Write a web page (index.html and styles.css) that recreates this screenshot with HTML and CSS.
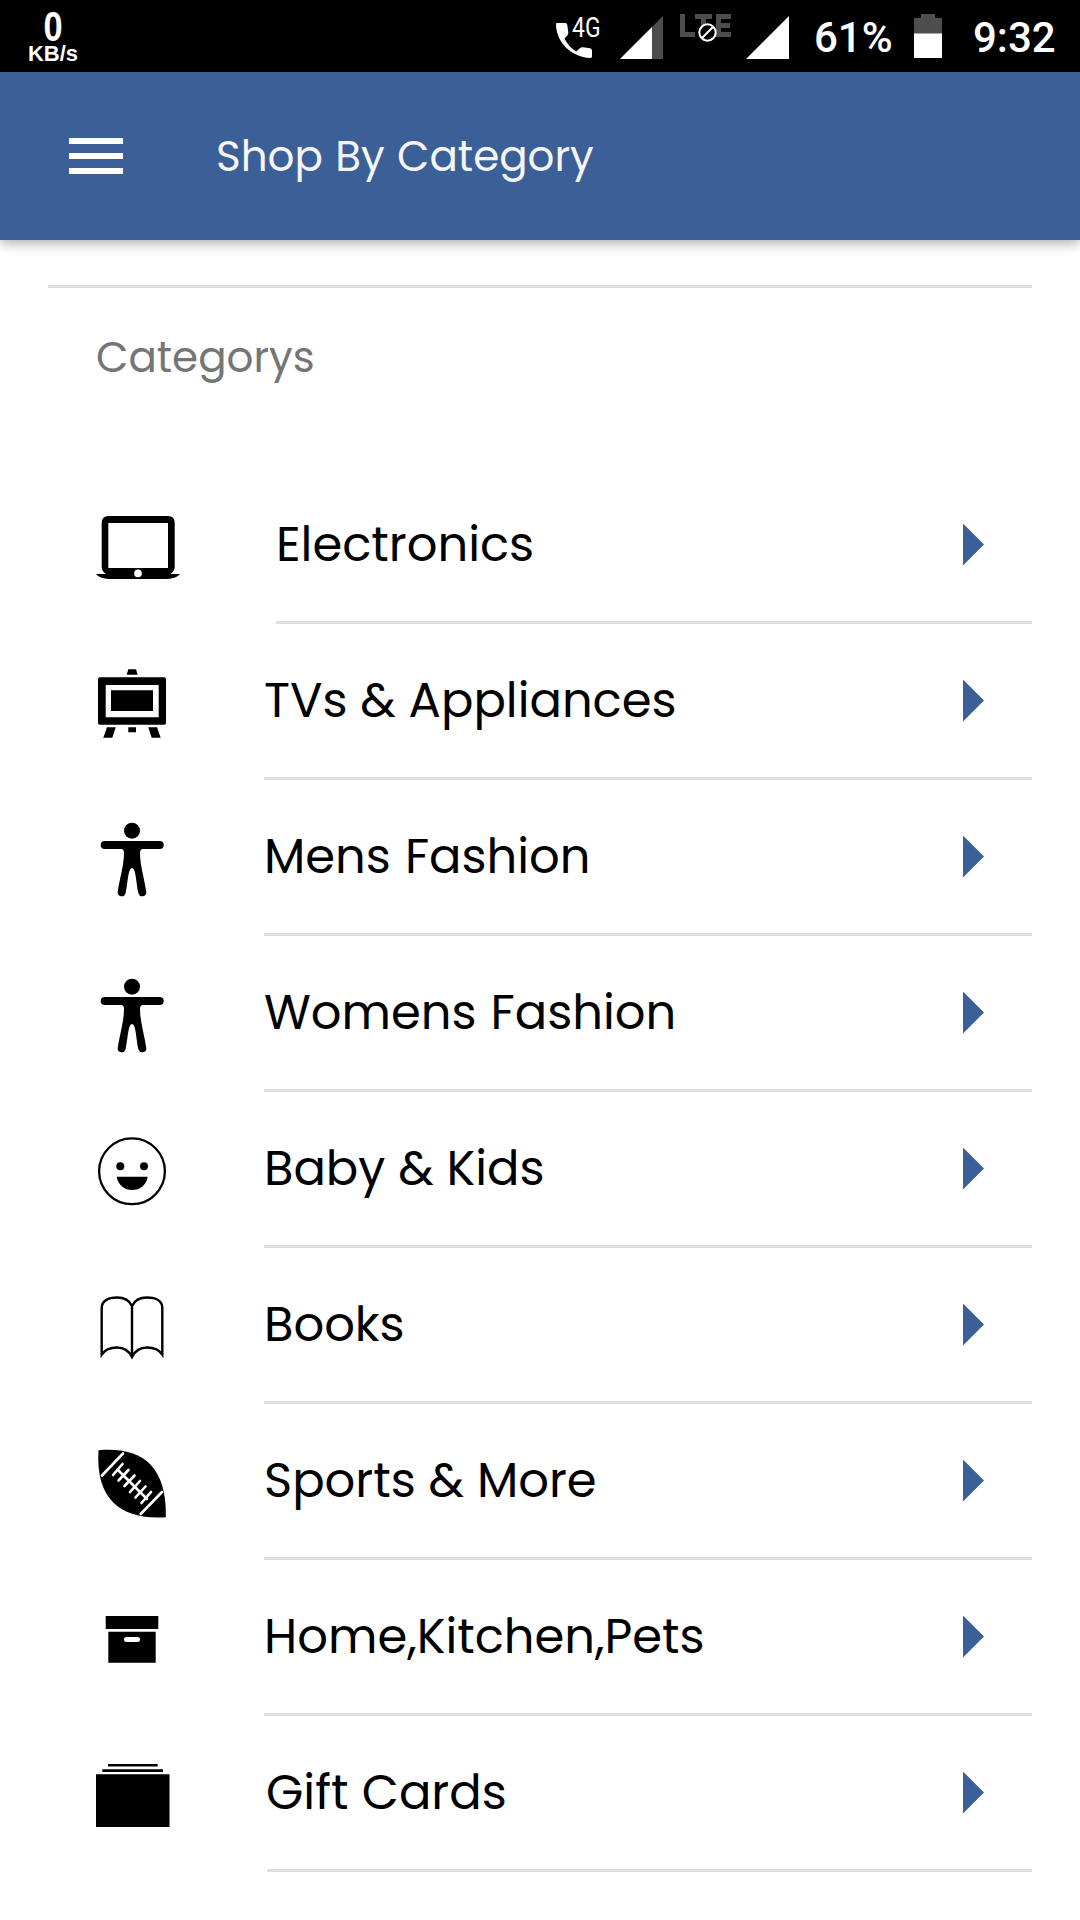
FILE: index.html
```html
<!DOCTYPE html>
<html lang="en">
<head>
<meta charset="utf-8">
<title>Shop By Category</title>
<link rel="stylesheet" href="styles.css">
</head>
<body>
<div class="status">
  <div class="speed"><span class="speed-value">0</span><span class="speed-unit">KB/s</span></div>
  <div class="status-right">
    <svg class="call" width="54" height="72" viewBox="0 0 54 72">
      <path fill="#fff" d="M1 23H9.500Q11 23 11.300 25L12.300 32.500Q12.400 34 11.500 35.200L8.500 38.500Q12 46 20 51.500L24.500 47.700Q25.500 47 27 47.200L34 48.300Q36 48.700 36 50.500V56.500Q36 58 34 58C15 57 0 42 0 24Q0 23 1 23Z"/>
      <text class="call-net" x="16" y="36.500" textLength="28.500" lengthAdjust="spacingAndGlyphs">4G</text>
    </svg>
    <svg class="signal-one" width="43" height="72" viewBox="0 0 43 72">
      <path fill="#4d4d4d" d="M43 16V59H0Z"/><path fill="#fff" d="M32 27V59H0Z"/>
    </svg>
    <svg class="lte" width="52" height="72" viewBox="0 0 52 72">
      <path fill="none" stroke="#4d4d4d" stroke-width="5" d="M2.500 14V34.500H15M15 16.500H32M23.500 14V37M51 16.500H38.500V34.500H51M38.500 25.500H50"/>
      <circle cx="27.500" cy="32.500" r="8.200" fill="#000" stroke="#fff" stroke-width="2"/>
      <path stroke="#fff" stroke-width="2" d="M22 38L33 27"/>
    </svg>
    <svg class="signal-two" width="43" height="72" viewBox="0 0 43 72"><path fill="#fff" d="M43 16V59H0Z"/></svg>
    <span class="percent">61%</span>
    <svg class="battery" width="28" height="72" viewBox="0 0 28 72">
      <path fill="#4d4d4d" d="M7 14H21V18H28V34H0V18H7Z"/><path fill="#fff" d="M0 33.500H28V58H0Z"/>
    </svg>
    <span class="clock">9:32</span>
  </div>
</div>

<header class="bar">
  <div class="burger"><i></i><i></i><i></i></div>
  <h1 class="title">Shop By Category</h1>
</header>

<main class="content">
  <h2 class="heading">Categorys</h2>
  <ul class="list">
    <li class="row row-first">
      <svg class="icon" viewBox="0 0 100 156"><path fill-rule="evenodd" d="M18.500 48H78Q84.700 48 84.700 55V99Q84.700 103 80.500 106H90C88 109 82 111 74 111H22C14 111 8 109 6 106H16Q11.700 103 11.700 99V55Q11.700 48 18.500 48ZM18.300 55V100H78V55Z"/><circle cx="48" cy="105.400" r="3.800" fill="#fff"/></svg>
      <div class="cell"><span class="label">Electronics</span><span class="arrow"></span></div>
    </li>
    <li class="row">
      <svg class="icon" viewBox="0 0 100 156"><path d="M38.300 45.300H46L47.700 50.700H36.700ZM17 103.300H25.700L22.300 113.700H13.300ZM58.300 103.300H67L70.700 113.700H61.700ZM38.300 103.300H46V108.300H38.300ZM21 66.200H63V87H21Z"/><path fill-rule="evenodd" d="M10 53.200H74Q76 53.200 76 55.200V98.700Q76 100.700 74 100.700H10Q8 100.700 8 98.700V55.200Q8 53.200 10 53.200ZM15.700 61V93.200H68.700V61Z"/></svg>
      <div class="cell"><span class="label">TVs &amp; Appliances</span><span class="arrow"></span></div>
    </li>
    <li class="row">
      <svg class="icon" viewBox="0 0 100 156"><circle cx="42" cy="50.700" r="8"/><path d="M14.700 61H69.700A4 4 0 0 1 69.700 69H53Q50 69 50 73C50 85 54 97 56.300 112A4 4 0 0 1 48.500 113.500C46 103 46 88 42 88S38 103 35.500 113.500A4 4 0 0 1 27.700 112C30 97 34 85 34 73Q34 69 31 69H14.700A4 4 0 0 1 14.700 61Z"/></svg>
      <div class="cell"><span class="label loose">Mens Fashion</span><span class="arrow"></span></div>
    </li>
    <li class="row">
      <svg class="icon" viewBox="0 0 100 156"><circle cx="42" cy="50.700" r="8"/><path d="M14.700 61H69.700A4 4 0 0 1 69.700 69H53Q50 69 50 73C50 85 54 97 56.300 112A4 4 0 0 1 48.500 113.500C46 103 46 88 42 88S38 103 35.500 113.500A4 4 0 0 1 27.700 112C30 97 34 85 34 73Q34 69 31 69H14.700A4 4 0 0 1 14.700 61Z"/></svg>
      <div class="cell"><span class="label loose">Womens Fashion</span><span class="arrow"></span></div>
    </li>
    <li class="row">
      <svg class="icon" viewBox="0 0 100 156"><circle cx="42" cy="79.300" r="32.900" fill="none" stroke="#000" stroke-width="2.300"/><circle cx="30.300" cy="74.300" r="4"/><circle cx="54" cy="74.300" r="4"/><path d="M26.700 84.700H57.700C56.500 93 50 98 42.200 98S28 93 26.700 84.700Z"/></svg>
      <div class="cell"><span class="label">Baby &amp; Kids</span><span class="arrow"></span></div>
    </li>
    <li class="row">
      <svg class="icon" viewBox="0 0 100 156"><path fill="none" stroke="#000" stroke-width="2.400" d="M42 58V110M42 58C39 51.500 33 49.500 27 49.500C18 49.500 11.700 53 11.700 60V106.500C15 101.500 21 99.500 27 99.500C34 99.500 39 103 42 109C45 103 50 99.500 57 99.500C63 99.500 69 101.500 72.300 106.500V60C72.300 53 66 49.500 57 49.500C51 49.500 45 51.500 42 58Z"/></svg>
      <div class="cell"><span class="label">Books</span><span class="arrow"></span></div>
    </li>
    <li class="row">
      <svg class="icon" viewBox="0 0 100 156"><path d="M8.500 46.300C48 43 77 58 75.800 113.300C36 116 5 100 8.500 46.300Z"/><path fill="none" stroke="#fff" stroke-width="2.600" stroke-linecap="round" d="M33 49.500L12 71.500M72 88L50.700 110M27.500 65.500L57 95"/><path fill="none" stroke="#fff" stroke-width="2.600" stroke-linecap="round" d="M32.500 60L23 71M38.500 66L28.500 76.500M44.500 71.500L34.500 82M50 77L40 88M55.500 82.500L45.500 93.500M61 88L51.500 99"/></svg>
      <div class="cell"><span class="label">Sports &amp; More</span><span class="arrow"></span></div>
    </li>
    <li class="row">
      <svg class="icon" viewBox="0 0 100 156"><path d="M15.700 56H68.300V69H15.700ZM18.300 71.700H65.700V102.700H18.300Z"/><rect x="34" y="77" width="16" height="5" rx="2.200" fill="#fff"/></svg>
      <div class="cell"><span class="label">Home,Kitchen,Pets</span><span class="arrow"></span></div>
    </li>
    <li class="row row-last">
      <svg class="icon" viewBox="0 0 100 156"><path d="M18 48H67.700V50.500H18ZM12.300 53.200H73V56H12.300ZM6 58.300H79.500V111H6Z"/></svg>
      <div class="cell"><span class="label gift">Gift Cards</span><span class="arrow"></span></div>
    </li>
  </ul>
</main>
</body>
</html>
```
FILE: styles.css
```css
* { box-sizing: border-box; margin: 0; padding: 0; }
body {
  width: 1080px;
  height: 1920px;
  overflow: hidden;
  background: #fff;
  color: #000;
  font-family: Poppins, Inter, "Open Sans", sans-serif;
}
svg { display: block; flex: none; }

/* Device status bar */
.status {
  display: flex;
  justify-content: space-between;
  height: 72px;
  padding: 0 25px 0 28px;
  background: #000;
  color: #fff;
}
.speed {
  display: flex;
  flex-direction: column;
  align-items: center;
  width: 50px;
  padding-top: 8px;
  font-family: "Liberation Sans", Arial, sans-serif;
  font-weight: 700;
}
.speed-value { font-size: 43px; line-height: 36px; transform: scaleX(.8); }
.speed-unit { font-size: 22px; line-height: 19px; }
.status-right { display: flex; font-family: Roboto, sans-serif; font-weight: 500; line-height: 76px; }
.call-net { font: 400 27px Roboto, sans-serif; fill: #fff; }
.signal-one { margin-left: 10px; }
.lte { margin-left: 17px; }
.signal-two { margin-left: 14px; }
.percent { width: 78px; margin-left: 25px; font-size: 42px; white-space: nowrap; }
.battery { margin-left: 22px; }
.clock { width: 82px; margin-left: 31px; font-size: 42px; white-space: nowrap; }

/* App bar */
.bar {
  display: flex;
  align-items: center;
  height: 168px;
  padding-left: 69px;
  background: #3b5f97;
  box-shadow: 0 3px 12px rgba(0, 0, 0, .34);
}
.burger { display: grid; gap: 9px; width: 54px; margin-right: 93px; }
.burger i { height: 6px; background: #fff; }
.title { padding-top: 2px; font-size: 42px; font-weight: 400; line-height: 60px; word-spacing: 1.2px; color: #f5f5f5; }

/* Category list */
.content { margin: 45px 48px 0; border-top: 3px solid #dedede; }
.heading {
  height: 180px;
  padding: 40px 0 0 48px;
  font-size: 42px;
  font-weight: 400;
  line-height: 60px;
  color: #757575;
}
.list { list-style: none; }
.row { display: grid; grid-template-columns: 216px 1fr; height: 156px; }
.row-first { grid-template-columns: 228px 1fr; }
.row-last { grid-template-columns: 219px 1fr; }
.icon { width: 100px; height: 156px; margin-left: 42px; }
.cell {
  display: flex;
  align-items: center;
  justify-content: space-between;
  padding-right: 48px;
  border-bottom: 3px solid #dedede;
}
.label { font-size: 48px; line-height: 152px; white-space: nowrap; }
.loose { word-spacing: 1.2px; }
.gift { margin-left: -1px; word-spacing: .6px; }
.arrow { width: 21px; height: 42px; background: #3b5f97; clip-path: polygon(0 0, 100% 50%, 0 100%); }
```
